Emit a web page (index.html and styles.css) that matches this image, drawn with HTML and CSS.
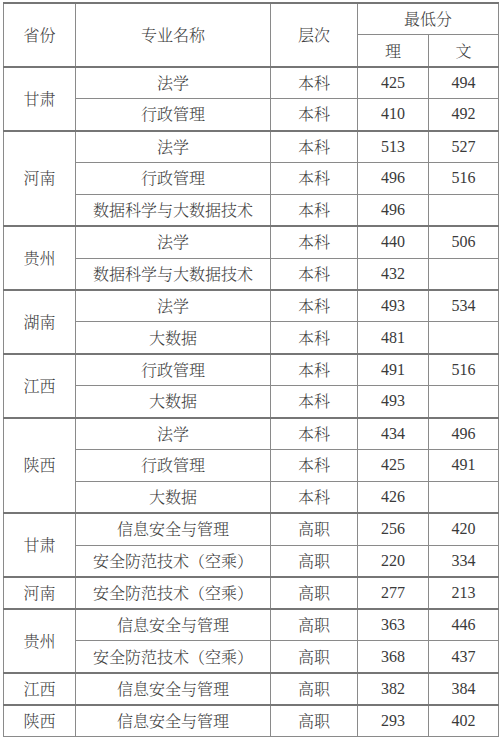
FILE: index.html
```html
<!DOCTYPE html>
<html lang="zh-CN">
<head>
<meta charset="utf-8">
<link rel="stylesheet" href="styles.css">
</head>
<body>
<table class="scores">
  <colgroup>
    <col class="c-prov"><col class="c-major"><col class="c-level"><col class="c-li"><col class="c-wen">
  </colgroup>
  <thead>
    <tr class="g">
      <th rowspan="2">省份</th>
      <th rowspan="2">专业名称</th>
      <th rowspan="2">层次</th>
      <th colspan="2">最低分</th>
    </tr>
    <tr>
      <th>理</th>
      <th>文</th>
    </tr>
  </thead>
  <tbody>
    <tr class="g"><td rowspan="2">甘肃</td><td>法学</td><td>本科</td><td class="n">425</td><td class="n">494</td></tr>
    <tr><td>行政管理</td><td>本科</td><td class="n">410</td><td class="n">492</td></tr>

    <tr class="g"><td rowspan="3">河南</td><td>法学</td><td>本科</td><td class="n">513</td><td class="n">527</td></tr>
    <tr><td>行政管理</td><td>本科</td><td class="n">496</td><td class="n">516</td></tr>
    <tr><td>数据科学与大数据技术</td><td>本科</td><td class="n">496</td><td class="n"></td></tr>

    <tr class="g"><td rowspan="2">贵州</td><td>法学</td><td>本科</td><td class="n">440</td><td class="n">506</td></tr>
    <tr><td>数据科学与大数据技术</td><td>本科</td><td class="n">432</td><td class="n"></td></tr>

    <tr class="g"><td rowspan="2">湖南</td><td>法学</td><td>本科</td><td class="n">493</td><td class="n">534</td></tr>
    <tr><td>大数据</td><td>本科</td><td class="n">481</td><td class="n"></td></tr>

    <tr class="g"><td rowspan="2">江西</td><td>行政管理</td><td>本科</td><td class="n">491</td><td class="n">516</td></tr>
    <tr><td>大数据</td><td>本科</td><td class="n">493</td><td class="n"></td></tr>

    <tr class="g"><td rowspan="3">陕西</td><td>法学</td><td>本科</td><td class="n">434</td><td class="n">496</td></tr>
    <tr><td>行政管理</td><td>本科</td><td class="n">425</td><td class="n">491</td></tr>
    <tr><td>大数据</td><td>本科</td><td class="n">426</td><td class="n"></td></tr>

    <tr class="g"><td rowspan="2">甘肃</td><td>信息安全与管理</td><td>高职</td><td class="n">256</td><td class="n">420</td></tr>
    <tr><td>安全防范技术（空乘）</td><td>高职</td><td class="n">220</td><td class="n">334</td></tr>

    <tr class="g"><td>河南</td><td>安全防范技术（空乘）</td><td>高职</td><td class="n">277</td><td class="n">213</td></tr>

    <tr class="g"><td rowspan="2">贵州</td><td>信息安全与管理</td><td>高职</td><td class="n">363</td><td class="n">446</td></tr>
    <tr><td>安全防范技术（空乘）</td><td>高职</td><td class="n">368</td><td class="n">437</td></tr>

    <tr class="g"><td>江西</td><td>信息安全与管理</td><td>高职</td><td class="n">382</td><td class="n">384</td></tr>

    <tr class="g"><td>陕西</td><td>信息安全与管理</td><td>高职</td><td class="n">293</td><td class="n">402</td></tr>
  </tbody>
</table>
</body>
</html>
```

FILE: styles.css
```css
html, body {
  margin: 0;
  padding: 0;
  background: #ffffff;
}

body {
  padding: 2px 0 0 3px;
}

.scores {
  border-collapse: collapse;
  table-layout: fixed;
  width: 495px;
  font-family: "Noto Serif CJK SC", "Liberation Serif", "Noto Sans CJK SC", serif;
  font-size: 16px;
  font-weight: 300;
  color: #404040;
}

.c-prov { width: 72px; }
.c-major { width: 195px; }
.c-level { width: 87px; }
.c-li { width: 71px; }
.c-wen { width: 70px; }

.scores tr {
  height: 31.9px;
}

.scores th,
.scores td {
  border: 1px solid #8a8a8a;
  padding: 0;
  text-align: center;
  vertical-align: middle;
  font-weight: 300;
  line-height: 20px;
  white-space: nowrap;
}

.scores tr.g > th,
.scores tr.g > td {
  border-top: 2px solid #767676;
}

.scores td.n {
  font-family: "Liberation Serif", serif;
  font-size: 16px;
  color: #3a3a3a;
}
```
